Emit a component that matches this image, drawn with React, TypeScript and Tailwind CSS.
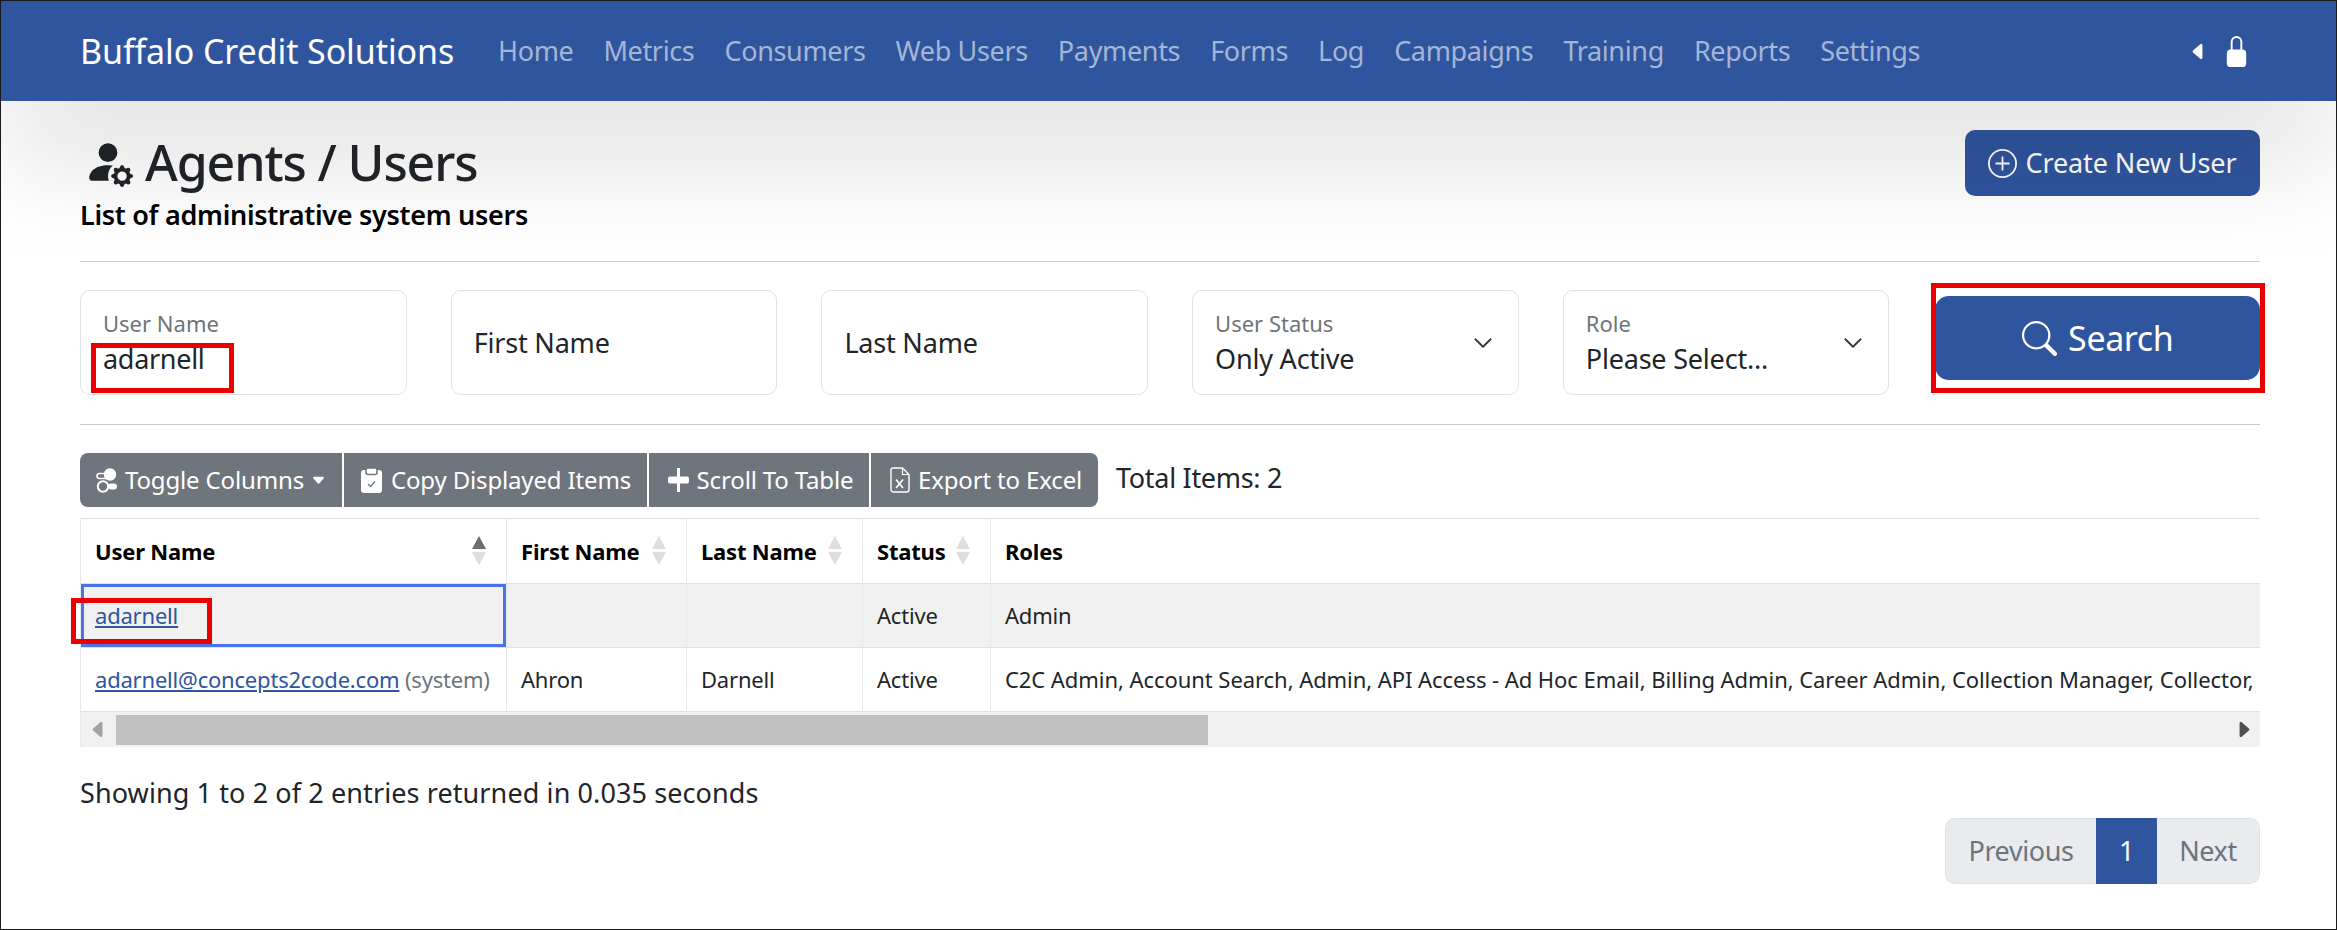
import { BsPersonFillGear, BsPlusCircle, BsSearch, BsLockFill, BsChevronDown, BsCaretLeftFill, BsCaretRightFill, BsCaretDownFill } from "react-icons/bs";

const nav = ["Home", "Metrics", "Consumers", "Web Users", "Payments", "Forms", "Log", "Campaigns", "Training", "Reports", "Settings"];

function Sort({ active = false }: { active?: boolean }) {
  return (
    <svg width="14" height="30" viewBox="0 0 14 30" className="shrink-0">
      <polygon points="7,0 14,13 0,13" fill={active ? "#6e6e6e" : "#dedede"} />
      <polygon points="7,29 14,16 0,16" fill="#dedede" />
    </svg>
  );
}

function ToggleIcon() {
  return (
    <svg width="21" height="25" viewBox="0 0 21 25" fill="none">
      <rect x="1" y="5.5" width="12" height="5" rx="2.5" stroke="#fff" strokeWidth="1.6" />
      <circle cx="14" cy="6.5" r="6.2" fill="#fff" />
      <circle cx="7" cy="18.5" r="5.2" stroke="#fff" strokeWidth="2" />
      <rect x="12" y="15.5" width="9" height="6" rx="3" fill="#fff" />
    </svg>
  );
}

function ClipIcon() {
  return (
    <svg width="23" height="26" viewBox="0 0 23 26" fill="none">
      <rect x="1" y="3" width="21" height="23" rx="3" fill="#fff" />
      <rect x="6" y="1" width="11" height="6.5" rx="2" fill="#fff" stroke="#6f757d" strokeWidth="1.5" />
      <path d="M8 17l2.5 2.5L15 14.5" stroke="#6f757d" strokeWidth="1.3" />
    </svg>
  );
}

function PlusIcon() {
  return (
    <svg width="21" height="24" viewBox="0 0 21 24">
      <rect x="9" y="0" width="3" height="24" fill="#fff" />
      <rect x="0" y="8.5" width="21" height="7" rx="2" fill="#fff" />
    </svg>
  );
}

function XFileIcon() {
  return (
    <svg width="20" height="26" viewBox="0 0 20 26" fill="none" stroke="#fff">
      <path d="M3 1h9.5L19 7.5V22.5a2.5 2.5 0 0 1-2.5 2.5H3.5A2.5 2.5 0 0 1 1 22.500V3a2 2 0 0 1 2-2z" strokeWidth="1.4" />
      <path d="M12.500 1v6.500H19" strokeWidth="1.2" />
      <path d="M6 12.500l7 8.500M13 12.500l-7 8.500" strokeWidth="1.6" />
    </svg>
  );
}

function Field({ label, value }: { label: string; value?: string }) {
  return (
    <div className="h-[105px] rounded-[10px] border border-[#dee2e6] bg-white pl-[22px] flex flex-col justify-center">
      {value ? (
        <>
          <div className="text-[22px] leading-[28px] text-[#6f757b]">{label}</div>
          <div className="text-[27px] leading-[36px] mt-[4px] text-[#212529] tracking-[-0.3px]">{value}</div>
        </>
      ) : (
        <div className="text-[27px] leading-[36px] text-[#212529] tracking-[-0.2px]">{label}</div>
      )}
    </div>
  );
}

function SelectField({ label, value }: { label: string; value: string }) {
  return (
    <div className="h-[105px] rounded-[10px] border border-[#dee2e6] bg-white pl-[22px] pr-[25px] flex items-center justify-between">
      <div>
        <div className="text-[22px] leading-[28px] text-[#6f757b]">{label}</div>
        <div className="text-[27px] leading-[36px] mt-[4px] text-[#212529] tracking-[-0.2px]">{value}</div>
      </div>
      <BsChevronDown className="text-[#343a40] text-[20px]" style={{ strokeWidth: 0.8 }} />
    </div>
  );
}

function ToolBtn({ w, icon, children, cls }: { w: string; icon: React.ReactNode; children: React.ReactNode; cls: string }) {
  return (
    <div className={`${w} ${cls} h-[54px] bg-[#6f757d] text-white text-[24px] tracking-[-0.15px] flex items-center justify-center gap-[8px]`}>
      {icon}
      <span>{children}</span>
    </div>
  );
}

export default function App() {
  return (
    <div className="h-[930px] w-full overflow-hidden border border-[#1a1a1a] bg-white" style={{ fontFamily: '"Noto Sans", "Open Sans", sans-serif' }}>
      <header className="relative z-10 h-[100px] bg-[#30559f] flex items-center pl-[79px] pr-[84px] shadow-[0_50px_120px_rgba(0,0,0,0.15)]">
        <div className="text-white text-[34px] tracking-[-0.1px] w-[418px] whitespace-nowrap">Buffalo Credit Solutions</div>
        <nav className="flex gap-[30px] text-[27px] tracking-[-0.35px] text-[#a5b5d5] whitespace-nowrap">
          {nav.map((n) => <span key={n}>{n}</span>)}
        </nav>
        <div className="ml-auto flex items-center gap-[12px] text-white">
          <BsCaretLeftFill className="text-[21px]" />
          <BsLockFill className="text-[31px]" />
        </div>
      </header>

      <main className="pl-[79px] pr-[76px]">
        <div className="h-[161px] flex justify-between items-start border-b border-[#cccccc] pt-[29px]">
          <div className="pt-[3px]">
            <div className="flex items-center h-[58px] text-[#212529]">
              <BsPersonFillGear className="text-[50px] ml-[3px] mr-[12px]" />
              <h1 className="text-[50px] font-medium leading-[58px] tracking-[-1.1px]">Agents / Users</h1>
            </div>
            <div className="text-[27px] font-semibold leading-[32px] mt-[8px] text-black tracking-[-0.3px]">List of administrative system users</div>
          </div>
          <div className="h-[66px] w-[295px] rounded-[10px] bg-[#30559f] text-white text-[27px] tracking-[-0.1px] flex items-center justify-center gap-[8px]">
            <BsPlusCircle className="text-[29px]" />
            <span>Create New User</span>
          </div>
        </div>

        <div className="h-[163px] border-b border-[#cccccc] grid grid-cols-[repeat(5,326.7px)_1fr] gap-x-[44px] pt-[28px] items-start">
          <div className="relative">
            <Field label="User Name" value="adarnell" />
            <div className="absolute left-[11px] top-[53px] w-[143px] h-[50px] border-[5px] border-[#ea0000]" />
          </div>
          <Field label="First Name" />
          <Field label="Last Name" />
          <SelectField label="User Status" value="Only Active" />
          <SelectField label="Role" value="Please Select..." />
          <div className="relative h-[84px] mt-[6px] ml-[2px] rounded-[14px] bg-[#30559f] text-white text-[34px] tracking-[-0.4px] flex items-center justify-center gap-[11px]">
            <BsSearch className="text-[35px]" />
            <span>Search</span>
            <div className="absolute -left-[4px] -right-[5px] -top-[13px] -bottom-[13px] border-[5px] border-[#ea0000]" />
          </div>
        </div>

        <div className="flex items-center mt-[28px] h-[54px]">
          <div className="flex gap-[2px]">
            <ToolBtn w="w-[262px]" cls="rounded-l-[8px]" icon={<ToggleIcon />}>
              <span className="inline-flex items-center gap-[7px]">Toggle Columns<BsCaretDownFill className="text-[15px]" /></span>
            </ToolBtn>
            <ToolBtn w="w-[303px]" cls="" icon={<ClipIcon />}>Copy Displayed Items</ToolBtn>
            <ToolBtn w="w-[220px]" cls="pl-[3px]" icon={<PlusIcon />}>Scroll To Table</ToolBtn>
            <ToolBtn w="w-[227px]" cls="rounded-r-[8px] pl-[3px]" icon={<XFileIcon />}>Export to Excel</ToolBtn>
          </div>
          <div className="ml-[18px] -mt-[4px] text-[27px] tracking-[-0.3px] text-[#212529]">Total Items: 2</div>
        </div>

        <div className="mt-[11px]">
          <table className="table-fixed border-collapse w-full text-[22px] tracking-[-0.2px] text-[#212529]">
            <colgroup>
              <col className="w-[426px]" />
              <col className="w-[180px]" />
              <col className="w-[176px]" />
              <col className="w-[128px]" />
              <col />
            </colgroup>
            <thead>
              <tr className="h-[65px] border-y border-[#dee2e6] text-black">
                <th className="border-x border-[#e6e8eb] pl-[14px] pr-[15px] text-left font-bold">
                  <div className="flex items-center justify-between pr-[5px]">User Name<Sort active /></div>
                </th>
                <th className="border-x border-[#e6e8eb] pl-[14px] pr-[15px] text-left font-bold">
                  <div className="flex items-center justify-between pr-[5px]">First Name<Sort /></div>
                </th>
                <th className="border-x border-[#e6e8eb] pl-[14px] pr-[15px] text-left font-bold">
                  <div className="flex items-center justify-between pr-[5px]">Last Name<Sort /></div>
                </th>
                <th className="border-x border-[#e6e8eb] pl-[14px] pr-[15px] text-left font-bold">
                  <div className="flex items-center justify-between pr-[5px]">Status<Sort /></div>
                </th>
                <th className="border-l border-[#e6e8eb] pl-[14px] text-left font-bold">Roles</th>
              </tr>
            </thead>
            <tbody>
              <tr className="h-[64px] bg-[#f1f1f1] border-b border-[#dee2e6]">
                <td className="relative border-x border-[#e6e8eb] pl-[14px]">
                  <a className="text-[#30559f] underline">adarnell</a>
                  <div className="absolute inset-0 border-[3px] border-[#4a72ea]" />
                  <div className="absolute -left-[10px] top-[14px] w-[141px] h-[46px] border-[5px] border-[#ea0000]" />
                </td>
                <td className="border-x border-[#e6e8eb]" />
                <td className="border-x border-[#e6e8eb]" />
                <td className="border-x border-[#e6e8eb] pl-[14px]">Active</td>
                <td className="border-l border-[#e6e8eb] pl-[14px]">Admin</td>
              </tr>
              <tr className="h-[64px] border-b border-[#dee2e6]">
                <td className="border-x border-[#e6e8eb] pl-[14px] whitespace-nowrap">
                  <a className="text-[#30559f] underline">adarnell@concepts2code.com</a> <span className="text-[#6c757d]">(system)</span>
                </td>
                <td className="border-x border-[#e6e8eb] pl-[14px]">Ahron</td>
                <td className="border-x border-[#e6e8eb] pl-[14px]">Darnell</td>
                <td className="border-x border-[#e6e8eb] pl-[14px]">Active</td>
                <td className="border-l border-[#e6e8eb] pl-[14px] whitespace-nowrap tracking-[-0.06px]">C2C Admin, Account Search, Admin, API Access - Ad Hoc Email, Billing Admin, Career Admin, Collection Manager, Collector,</td>
              </tr>
            </tbody>
          </table>
          <div className="h-[35px] bg-[#f1f1f1] flex items-center pl-[7px] pr-[6px] border-l border-[#e6e8eb]">
            <BsCaretLeftFill className="text-[#a3a3a3] text-[21px]" />
            <div className="ml-[7px] w-[1092px] h-[30px] bg-[#c1c1c1]" />
            <BsCaretRightFill className="ml-auto text-[#505050] text-[21px]" />
          </div>
        </div>

        <div className="mt-[29px] text-[27px] leading-[34px] tracking-[0.1px] text-[#212529]">Showing 1 to 2 of 2 entries returned in 0.035 seconds</div>

        <div className="mt-[8px] flex justify-end">
          <div className="flex h-[66px] text-[27px] tracking-[-0.4px] text-[#6c757d]">
            <div className="w-[151px] bg-[#e9ebef] border border-r-0 border-[#dee2e6] rounded-l-[10px] flex items-center justify-center">Previous</div>
            <div className="w-[61px] bg-[#30559f] text-white flex items-center justify-center">1</div>
            <div className="w-[103px] bg-[#e9ebef] border border-l-0 border-[#dee2e6] rounded-r-[10px] flex items-center justify-center">Next</div>
          </div>
        </div>
      </main>
    </div>
  );
}
